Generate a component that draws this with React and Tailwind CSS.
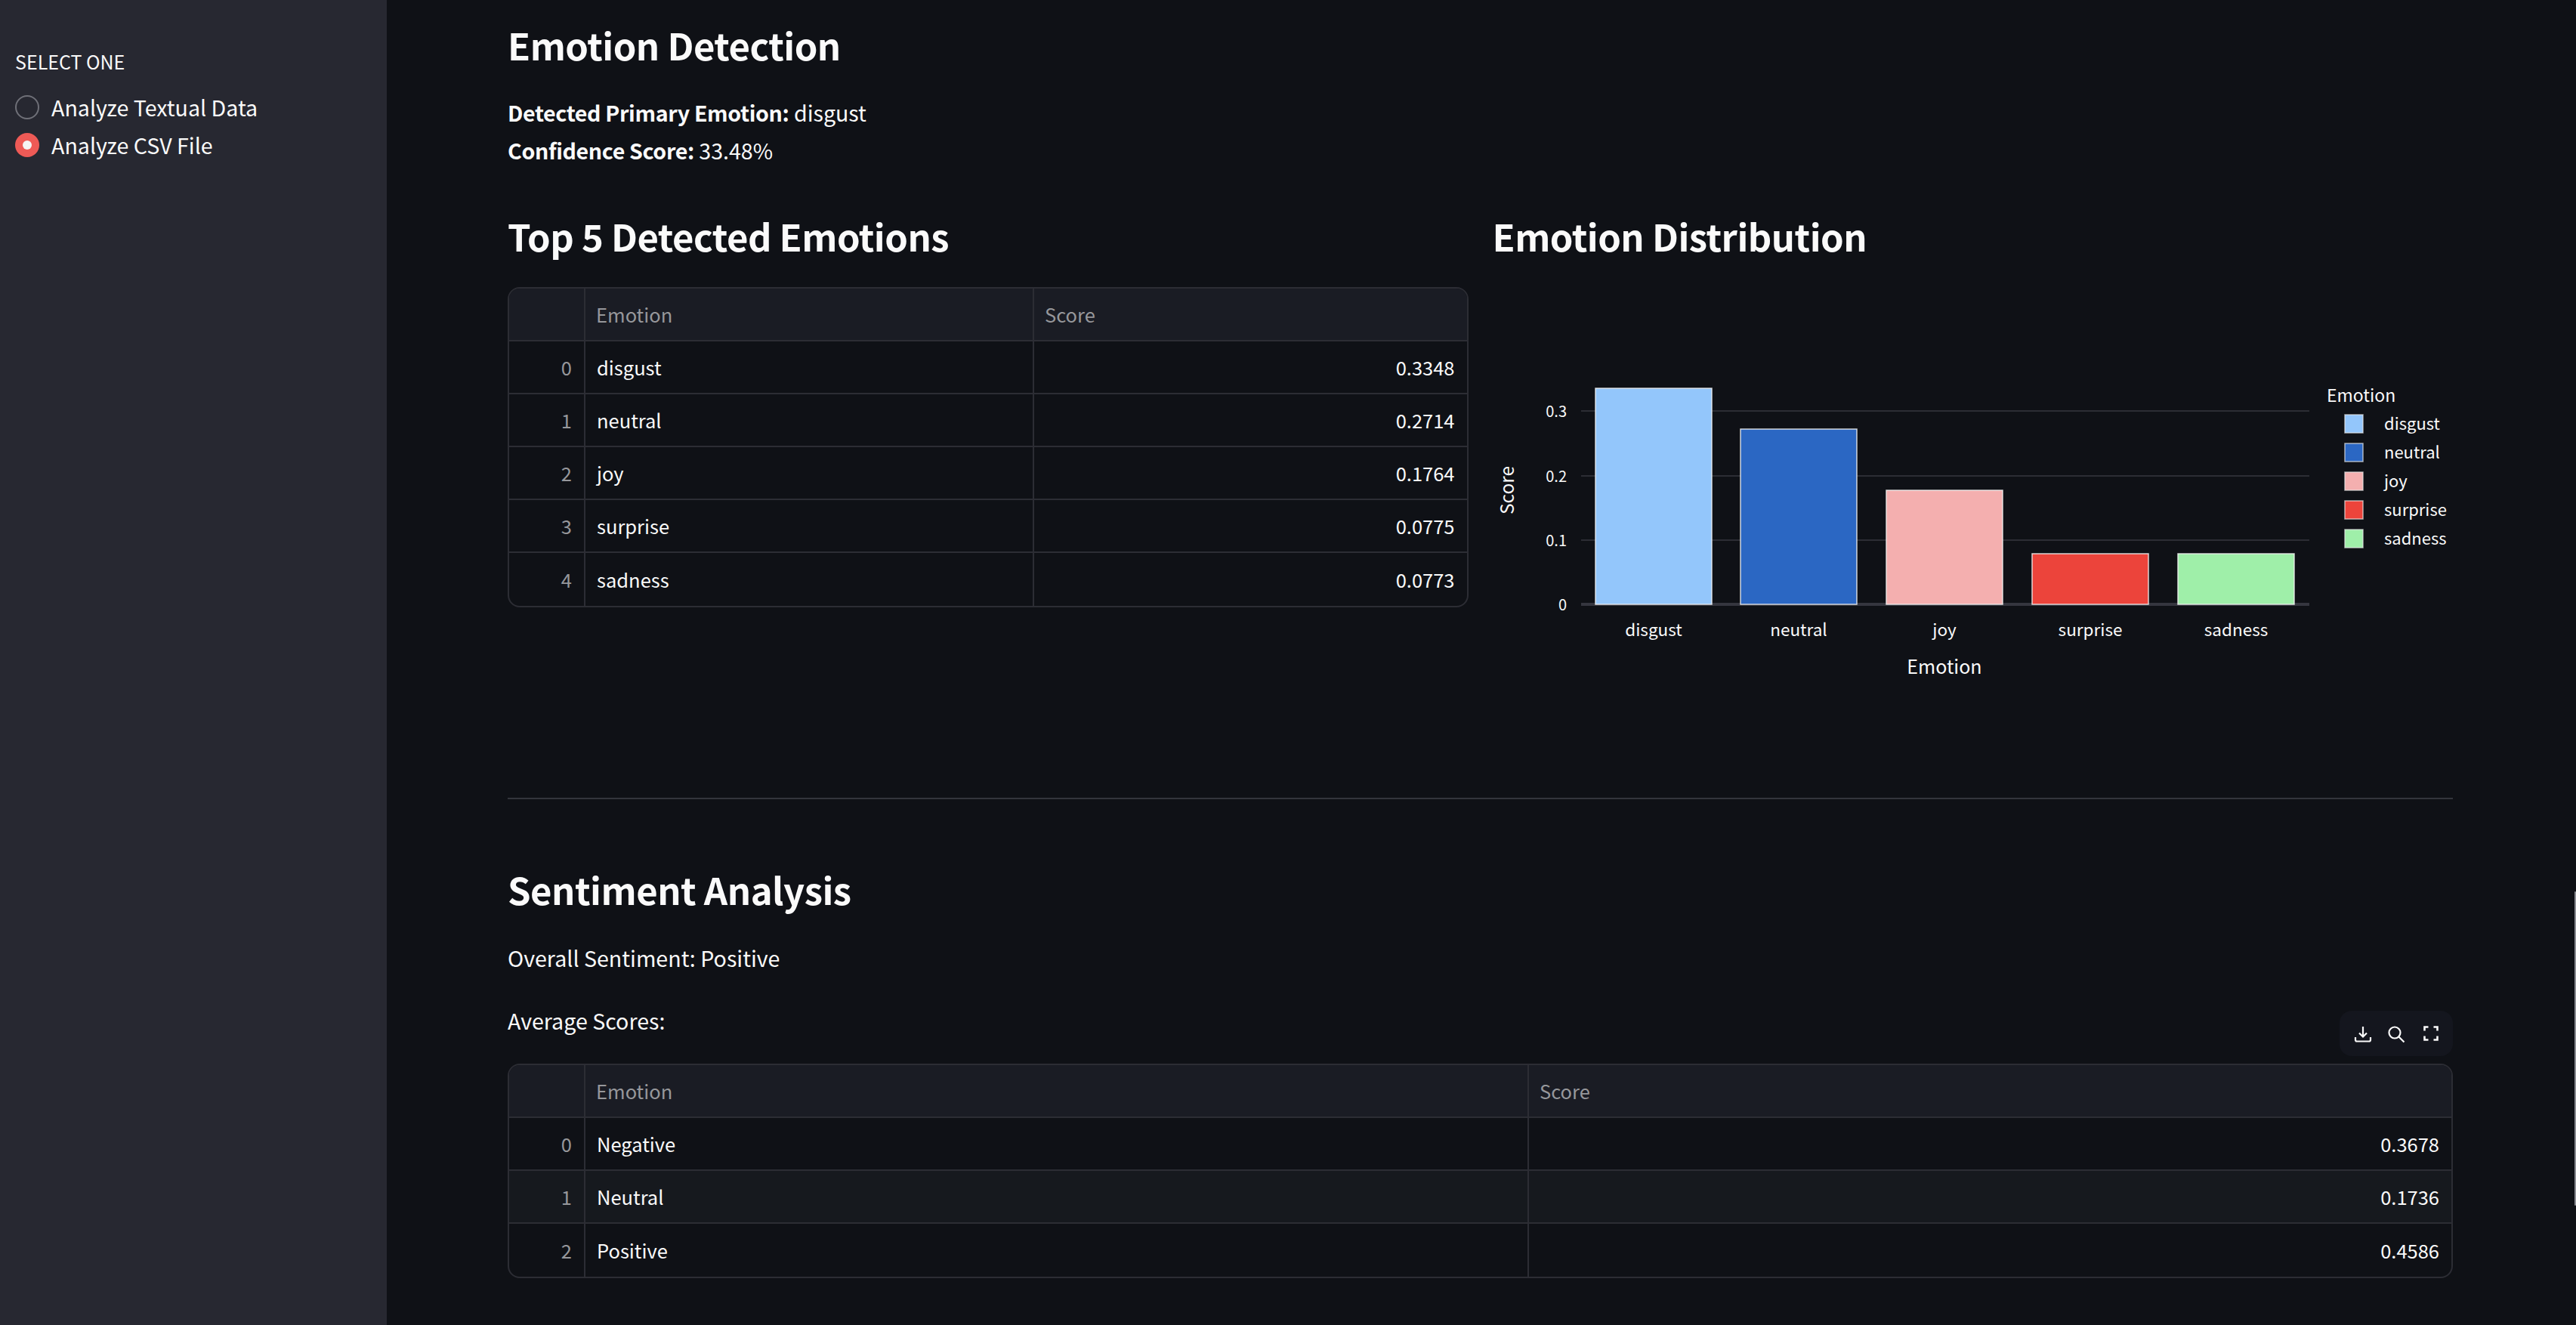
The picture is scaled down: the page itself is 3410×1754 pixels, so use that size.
const emotions = [
  ['disgust', '0.3348'],
  ['neutral', '0.2714'],
  ['joy', '0.1764'],
  ['surprise', '0.0775'],
  ['sadness', '0.0773'],
];

const sentiments = [
  ['Negative', '0.3678'],
  ['Neutral', '0.1736'],
  ['Positive', '0.4586'],
];

// x / top in chart coordinates, base line sits at y=420
const bars = [
  { name: 'disgust', x: 136, top: 134, fill: '#93c6fb' },
  { name: 'neutral', x: 328, top: 188, fill: '#2b67c3' },
  { name: 'joy', x: 521, top: 269, fill: '#f4afaf' },
  { name: 'surprise', x: 714, top: 353, fill: '#ec443b' },
  { name: 'sadness', x: 907, top: 353, fill: '#9fefa9' },
];

function DataTable({ rows, gridClass, zebra }) {
  return (
    <div className="rounded-2xl border-2 border-[#2c2d34] overflow-hidden text-[25.5px]">
      <div className={`grid ${gridClass} h-[70px] bg-[#1a1c24] text-[#96979b] border-b-2 border-[#2c2d34]`}>
        <div className="border-r-2 border-[#2c2d34]" />
        <div className="flex items-center pl-[14px] border-r-2 border-[#2c2d34]">Emotion</div>
        <div className="flex items-center pl-[14px]">Score</div>
      </div>
      {rows.map(([name, score], i) => (
        <div
          key={name}
          className={`grid ${gridClass} h-[70px] ${i < rows.length - 1 ? 'border-b-2 border-[#2c2d34]' : ''} ${zebra && i % 2 === 1 ? 'bg-[#16191e]' : ''}`}
        >
          <div className="flex items-center justify-end px-4 text-[#96979b] border-r-2 border-[#2c2d34]">{i}</div>
          <div className="flex items-center pl-[15px] border-r-2 border-[#2c2d34]">{name}</div>
          <div className="flex items-center justify-end px-4">{score}</div>
        </div>
      ))}
    </div>
  );
}

function Radio({ label, checked }) {
  return (
    <div className="flex items-center gap-4 h-[50px]">
      {checked ? (
        <span className="flex items-center justify-center w-8 h-8 rounded-full bg-[#ee5a56]">
          <span className="w-3 h-3 rounded-full bg-[#f5f5f5]" />
        </span>
      ) : (
        <span className="w-8 h-8 rounded-full border-2 border-[#6f7078]" />
      )}
      <span className="text-[28.6px]">{label}</span>
    </div>
  );
}

function EmotionChart() {
  return (
    <svg width="1272" height="560" className="block" fill="#fafafa">
      {[165, 251, 336].map((y) => (
        <line key={y} x1="117" x2="1081" y1={y} y2={y} stroke="#2c2d34" strokeWidth="2" />
      ))}
      <line x1="117" x2="1081" y1="421" y2="421" stroke="#35363f" strokeWidth="4" />
      {[['0.3', 165], ['0.2', 251], ['0.1', 336], ['0', 421]].map(([t, y]) => (
        <text key={t} x="98" y={y + 8} textAnchor="end" fontSize="20">{t}</text>
      ))}
      {bars.map((b) => (
        <g key={b.name}>
          <rect x={b.x} y={b.top + 1} width="154" height={420 - b.top} fill={b.fill} stroke="#f0f0f0" strokeOpacity="0.85" strokeWidth="1.5" />
          <text x={b.x + 77} y="463" textAnchor="middle" fontSize="22.5">{b.name}</text>
        </g>
      ))}
      <text x="598" y="513" textAnchor="middle" fontSize="25">Emotion</text>
      <text transform="translate(28 270) rotate(-90)" textAnchor="middle" fontSize="24.5">Score</text>
      <text x="1104" y="153" fontSize="23">Emotion</text>
      {bars.map((b, i) => (
        <g key={b.name}>
          <rect x="1128" y={170 + i * 38} width="24" height="24" fill={b.fill} stroke="#e6e6e6" strokeOpacity="0.7" strokeWidth="1.5" />
          <text x="1180" y={190 + i * 38} fontSize="22">{b.name}</text>
        </g>
      ))}
    </svg>
  );
}

function TableToolbar() {
  return (
    <div className="absolute right-0 top-[-70px] flex items-center w-[150px] h-[60px] rounded-2xl bg-[#14161e] text-[#fafafa]">
      <svg width="24" height="24" viewBox="0 0 24 24" fill="none" stroke="currentColor" strokeWidth="2.2" className="absolute left-[19px] top-[19px]">
        <path d="M12 2v13M7 10.5l5 5 5-5M2 16v3.5a2 2 0 0 0 2 2h16a2 2 0 0 0 2-2V16" />
      </svg>
      <svg width="24" height="24" viewBox="0 0 24 24" fill="none" stroke="currentColor" strokeWidth="2.2" className="absolute left-[63px] top-[19px]">
        <circle cx="10" cy="10" r="7.5" />
        <path d="M15.5 15.5l7 7" />
      </svg>
      <svg width="20" height="20" viewBox="0 0 20 20" fill="none" stroke="currentColor" strokeWidth="2.6" className="absolute left-[111px] top-[20px]">
        <path d="M1.5 6.5v-5h5M13.5 1.5h5v5M18.5 13.5v5h-5M6.5 18.5h-5v-5" />
      </svg>
    </div>
  );
}

function Heading({ children, className = '' }) {
  return <h3 className={`text-[49px] leading-[72px] font-semibold tracking-[-0.5px] ${className}`}>{children}</h3>;
}

export default function App() {
  return (
    <div className="relative flex w-[3410px] h-[1754px] overflow-hidden bg-[#0f1116] text-[#fafafa] font-['Noto_Sans_CJK_SC','Source_Sans_Pro',sans-serif]">
      <aside className="w-[512px] shrink-0 bg-[#272831] pl-5 pt-[60px]">
        <div className="text-[25px] leading-[42px] mb-[15px]">SELECT ONE</div>
        <Radio label="Analyze Textual Data" />
        <Radio label="Analyze CSV File" checked />
      </aside>

      <main className="w-[2575px] ml-[160px] pt-[23px]">
        <Heading>Emotion Detection</Heading>
        <div className="mt-[29px] text-[28.6px] leading-[50px]">
          <p><strong className="font-semibold tracking-[-0.36px]">Detected Primary Emotion:</strong> disgust</p>
          <p><strong className="font-semibold tracking-[-0.36px]">Confidence Score:</strong> 33.48%</p>
        </div>

        <div className="grid grid-cols-2 gap-8 mt-[52px]">
          <div>
            <Heading>Top 5 Detected Emotions</Heading>
            <div className="mt-[32px]">
              <DataTable rows={emotions} gridClass="grid-cols-[101px_594px_1fr]" />
            </div>
          </div>
          <div>
            <Heading>Emotion Distribution</Heading>
            <div className="mt-[31px]">
              <EmotionChart />
            </div>
          </div>
        </div>

        <hr className="mt-[117px] border-t-2 border-[#33353c]" />

        <Heading className="mt-[83px]">Sentiment Analysis</Heading>
        <p className="mt-[30px] text-[28.6px] leading-[50px]">Overall Sentiment: Positive</p>
        <p className="mt-[33px] text-[28.6px] leading-[50px]">Average Scores:</p>
        <div className="relative mt-[32px]">
          <TableToolbar />
          <DataTable rows={sentiments} gridClass="grid-cols-[101px_1249px_1fr]" zebra />
        </div>
      </main>

      <div className="absolute right-0 top-[1180px] w-[2px] h-[416px] rounded-full bg-[#8a8c92]" />
    </div>
  );
}
